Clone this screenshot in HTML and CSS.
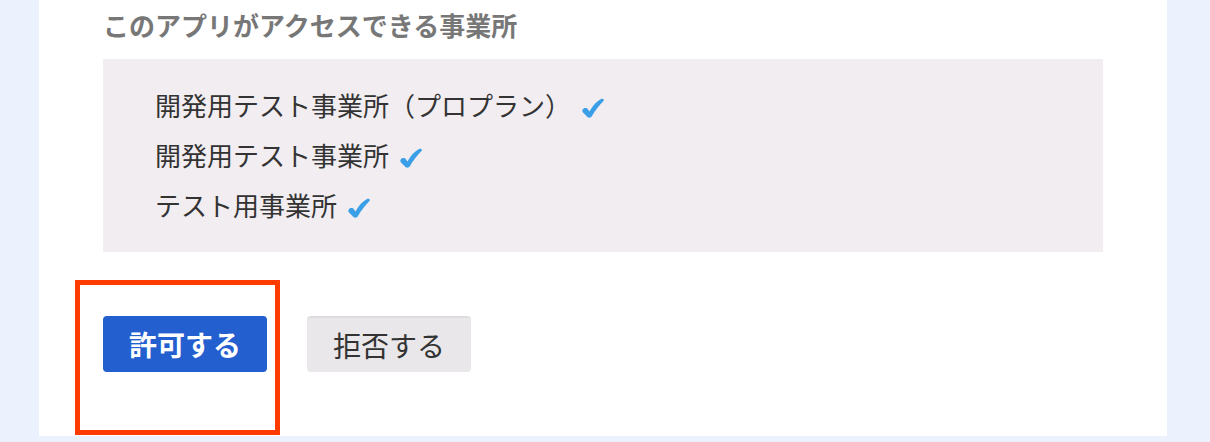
FILE: index.html
```html
<!DOCTYPE html>
<html lang="ja">
<head>
    <meta charset="UTF-8">
    <meta name="viewport" content="width=device-width, initial-scale=1.0">
    <link rel="stylesheet" href="styles.css">
    <title>アプリの許可</title>
</head>
<body>
    <div class="card">
        <h2 class="section-title">このアプリがアクセスできる事業所</h2>
        <ul class="office-list">
            <li>開発用テスト事業所（プロプラン）<svg class="check" viewBox="0 0 22 20"><path d="M0.5 12 C1.5 9.5 5 9.5 6 11.5 L7.5 13.5 C10.5 8 15 3 19.5 0.8 C21 0.2 22.5 1.5 21.5 3 C17 7.5 13 12.5 10 18 C9 20 6 20.2 5 18.5 L1 14.5 C0.3 13.8 0.2 12.8 0.5 12 Z"/></svg></li>
            <li>開発用テスト事業所<svg class="check" viewBox="0 0 22 20"><path d="M0.5 12 C1.5 9.5 5 9.5 6 11.5 L7.5 13.5 C10.5 8 15 3 19.5 0.8 C21 0.2 22.5 1.5 21.5 3 C17 7.5 13 12.5 10 18 C9 20 6 20.2 5 18.5 L1 14.5 C0.3 13.8 0.2 12.8 0.5 12 Z"/></svg></li>
            <li>テスト用事業所<svg class="check" viewBox="0 0 22 20"><path d="M0.5 12 C1.5 9.5 5 9.5 6 11.5 L7.5 13.5 C10.5 8 15 3 19.5 0.8 C21 0.2 22.5 1.5 21.5 3 C17 7.5 13 12.5 10 18 C9 20 6 20.2 5 18.5 L1 14.5 C0.3 13.8 0.2 12.8 0.5 12 Z"/></svg></li>
        </ul>
        <div class="actions">
            <button class="btn btn-allow" type="button">許可する</button>
            <button class="btn btn-deny" type="button">拒否する</button>
            <div class="highlight"></div>
        </div>
    </div>
</body>
</html>
```

FILE: styles.css
```css
body, html {
    margin: 0;
    height: 100%;
    overflow: hidden;
    background-color: #ebf1fd;
}

body {
    font-family: "Noto Sans CJK JP", "Noto Sans", sans-serif;
    color: #333333;
}

.card {
    width: 1128px;
    height: 436px;
    box-sizing: border-box;
    margin-left: 39px;
    padding: 7px 64px 0 64px;
    background-color: #ffffff;
}

.section-title {
    margin: 0 0 16px 0;
    font-size: 26px;
    line-height: 36px;
    font-weight: 700;
    color: #777777;
}

.office-list {
    margin: 0;
    padding: 21px 0 22px 52px;
    list-style: none;
    background-color: #f1edf1;
    font-size: 26px;
    line-height: 50px;
}

.office-list li {
    height: 50px;
}

.check {
    width: 22px;
    height: 20px;
    margin-left: 11px;
    vertical-align: -2px;
    fill: #3a9fe6;
}

.actions {
    position: relative;
    display: flex;
    gap: 40px;
    padding-top: 64px;
}

.btn {
    width: 164px;
    height: 56px;
    border: none;
    border-radius: 4px;
    font-family: "Noto Sans CJK JP", "Noto Sans", sans-serif;
    font-size: 28px;
    line-height: 56px;
    padding: 0;
}

.btn-allow {
    background-color: #235fcf;
    color: #ffffff;
    font-weight: 700;
}

.btn-deny {
    background-color: #e9e7ea;
    color: #333333;
    border-top: 2px solid #dedcdf;
    line-height: 52px;
}

.highlight {
    position: absolute;
    left: -28px;
    top: 28px;
    width: 195px;
    height: 145px;
    border: 5px solid #ff3b00;
}
```
